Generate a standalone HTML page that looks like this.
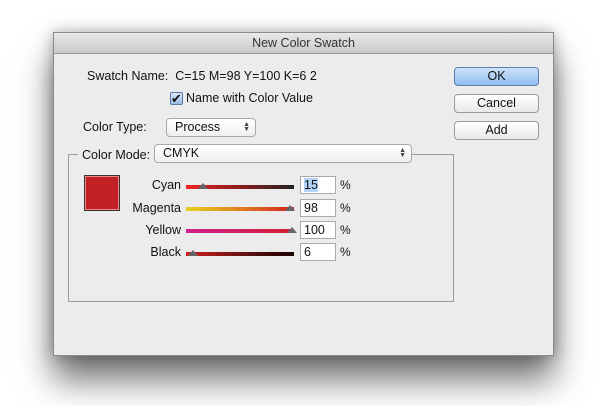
<!DOCTYPE html>
<html><head><style>
*{margin:0;padding:0;box-sizing:border-box}
body{width:600px;height:406px;background:#fff;position:relative;overflow:hidden;font-family:"Liberation Sans",sans-serif;font-size:12px;color:#111}
.win{position:absolute;left:53px;top:32px;width:501px;height:324px;background:#ececec;border:1px solid #8a8a8a;box-shadow:0 24px 32px rgba(0,0,0,.55),0 0 14px rgba(0,0,0,.3)}
.title{position:absolute;left:0;top:0;right:0;height:21px;background:linear-gradient(#e8e8e8,#c9c9c9);border-bottom:1px solid #9a9a9a;text-align:center;line-height:21px;font-size:12.5px;color:#333}
.a{position:absolute;white-space:nowrap}
.btn{position:absolute;left:400px;width:85px;height:19px;border:1px solid #9a9a9a;border-radius:4px;background:linear-gradient(#fff,#e9e9e9);text-align:center;line-height:17px;font-size:12.5px}
.ok{background:linear-gradient(#cfe3fa,#8fbcf0);border-color:#5a7fb0}
.sel{position:absolute;height:19px;border:1px solid #a8a8a8;border-radius:4px;background:linear-gradient(#fff,#f0f0f0);line-height:17px;padding-left:8px;font-size:12.5px}
.arr{position:absolute;right:5px;top:3px;font-size:7px;line-height:5px;color:#444}
.group{position:absolute;left:14px;top:121px;width:386px;height:148px;border:1px solid #9c9c9c}
.lab{position:absolute;right:372px;font-size:12.5px;white-space:nowrap}
.fld{position:absolute;left:246px;width:36px;height:18px;background:#fff;border:1px solid #aaa;padding-left:3px;line-height:16px;font-size:12.5px}
.pct{position:absolute;left:286px}
.bar{position:absolute;left:132px;width:108px;height:4px}
.thumb{position:absolute;width:0;height:0;border-left:5px solid transparent;border-right:5px solid transparent;border-bottom:6px solid #666}
</style></head><body>
<div class="win">
<div class="title">New Color Swatch</div>
<div class="a" style="left:33px;top:36px;font-size:12.5px">Swatch Name:&nbsp; C=15 M=98 Y=100 K=6 2</div>
<div class="a" style="left:116px;top:59px;width:13px;height:13px;border:1px solid #5b7aa8;border-radius:2px;background:linear-gradient(#dbe8f7,#9dbde4);font-size:13px;line-height:11px;text-align:center;color:#111">✔</div>
<div class="a" style="left:132px;top:58px;font-size:12.5px">Name with Color Value</div>
<div class="a" style="left:29px;top:87px;font-size:12.5px">Color Type:</div>
<div class="sel" style="left:112px;top:85px;width:90px">Process<span class="arr">▲<br>▼</span></div>
<div class="group"></div>
<div class="a" style="left:24px;top:115px;background:#ececec;padding:0 4px;font-size:12.5px">Color Mode:</div>
<div class="sel" style="left:100px;top:111px;width:258px">CMYK<span class="arr">▲<br>▼</span></div>
<div class="a" style="left:30px;top:142px;width:36px;height:36px;border:1px solid #333;background:#c12124;box-shadow:inset 0 0 0 1px #e88"></div>
<div class="lab" style="top:145px">Cyan</div>
<div class="lab" style="top:168px">Magenta</div>
<div class="lab" style="top:190px">Yellow</div>
<div class="lab" style="top:212px">Black</div>
<div class="bar" style="top:152px;background:linear-gradient(90deg,#e22,#8a1d1d 50%,#222)"></div>
<div class="bar" style="top:174px;background:linear-gradient(90deg,#e8d020,#e08020 50%,#d02020)"></div>
<div class="bar" style="top:196px;background:linear-gradient(90deg,#d02090,#d02030)"></div>
<div class="bar" style="top:219px;background:linear-gradient(90deg,#d02020,#5a1010 60%,#1a0000)"></div>
<div class="thumb" style="left:144px;top:150px"></div>
<div class="thumb" style="left:231px;top:172px"></div>
<div class="thumb" style="left:233px;top:194px"></div>
<div class="thumb" style="left:134px;top:217px"></div>
<div class="fld" style="top:143px"><span style="background:#b4d4fb">15</span></div>
<div class="fld" style="top:166px">98</div>
<div class="fld" style="top:188px">100</div>
<div class="fld" style="top:210px">6</div>
<div class="pct" style="top:145px">%</div>
<div class="pct" style="top:168px">%</div>
<div class="pct" style="top:190px">%</div>
<div class="pct" style="top:212px">%</div>
<div class="btn ok" style="top:34px">OK</div>
<div class="btn" style="top:61px">Cancel</div>
<div class="btn" style="top:88px">Add</div>
</div>
</body></html>
